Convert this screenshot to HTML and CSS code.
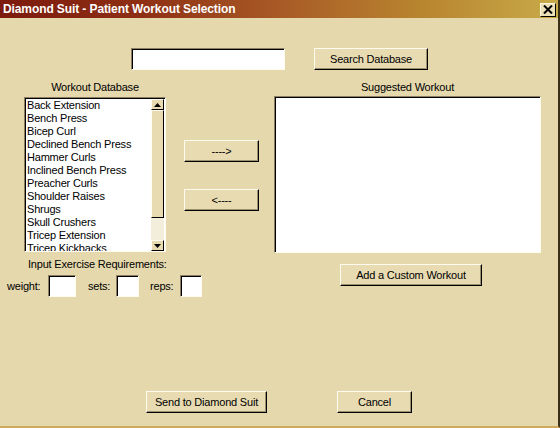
FILE: index.html
```html
<!DOCTYPE html>
<html>
<head>
<meta charset="utf-8">
<link rel="stylesheet" href="styles.css">
</head>
<body>
<div class="win">
  <div class="titlebar">
    <span class="title">Diamond Suit - Patient Workout Selection</span>
    <span class="close"><svg width="10" height="9" viewBox="0 0 10 9"><path d="M1 0.5 L9 8.5 M9 0.5 L1 8.5" stroke="#000" stroke-width="2"/></svg></span>
  </div>
  <div class="search-row">
    <div class="field search-field"></div>
    <div class="btn search-btn">Search Database</div>
  </div>
  <div class="lists-row">
    <div class="left-col">
      <div class="label">Workout Database</div>
      <div class="listbox">
        <ul class="items">
          <li>Back Extension</li>
          <li>Bench Press</li>
          <li>Bicep Curl</li>
          <li>Declined Bench Press</li>
          <li>Hammer Curls</li>
          <li>Inclined Bench Press</li>
          <li>Preacher Curls</li>
          <li>Shoulder Raises</li>
          <li>Shrugs</li>
          <li>Skull Crushers</li>
          <li>Tricep Extension</li>
          <li>Tricep Kickbacks</li>
        </ul>
        <div class="scrollbar">
          <div class="sb-btn"><svg width="7" height="4" viewBox="0 0 7 4"><path d="M3.5 0 L7 4 L0 4 Z" fill="#000"/></svg></div>
          <div class="sb-thumb"></div>
          <div class="sb-track"></div>
          <div class="sb-btn"><svg width="7" height="4" viewBox="0 0 7 4"><path d="M0 0 L7 0 L3.5 4 Z" fill="#000"/></svg></div>
        </div>
      </div>
    </div>
    <div class="mid-col">
      <div class="btn arrow-btn">----&gt;</div>
      <div class="btn arrow-btn">&lt;----</div>
    </div>
    <div class="right-col">
      <div class="label label-right">Suggested Workout</div>
      <div class="field suggested"></div>
    </div>
  </div>
  <div class="req-row">
    <div class="req">
      <div class="req-title">Input Exercise Requirements:</div>
      <div class="req-inputs">
        <span class="lbl lbl-weight">weight:</span>
        <span class="field box box-weight"></span>
        <span class="lbl lbl-sets">sets:</span>
        <span class="field box box-sets"></span>
        <span class="lbl lbl-reps">reps:</span>
        <span class="field box box-reps"></span>
      </div>
    </div>
    <div class="btn custom-btn">Add a Custom Workout</div>
  </div>
  <div class="bottom-row">
    <div class="btn send-btn">Send to Diamond Suit</div>
    <div class="btn cancel-btn">Cancel</div>
  </div>
</div>
</body>
</html>
```
FILE: styles.css
```css
html, body {
  margin: 0;
  padding: 0;
  background: #e5d8ad;
}
.win {
  width: 560px;
  height: 428px;
  box-sizing: border-box;
  background: #e5d8ad;
  border-right: 2px solid #3a3018;
  border-bottom: 2px solid #cfa95e;
  font-family: "Liberation Sans", Arial, sans-serif;
  font-size: 11px;
  letter-spacing: -0.2px;
  color: #000;
  overflow: hidden;
}
.titlebar {
  height: 18px;
  display: flex;
  align-items: center;
  justify-content: space-between;
  background: linear-gradient(to right, #7c1a0d 0%, #8e2f14 25%, #a85a26 50%, #b8842f 75%, #c8aa48 100%);
}
.title {
  color: #fff;
  font-weight: bold;
  font-size: 12px;
  padding-left: 3px;
  letter-spacing: -0.1px;
}
.close {
  width: 16px;
  height: 14px;
  box-sizing: border-box;
  margin-right: 2px;
  margin-top: 1px;
  background: #ece0b8;
  border: 1px solid;
  border-color: #fff8e0 #000 #000 #fff8e0;
  display: flex;
  align-items: center;
  justify-content: center;
}
.field {
  box-sizing: border-box;
  background: #fff;
  border: 1px solid;
  border-color: #8c8060 #fffbee #fffbee #8c8060;
  box-shadow: inset 1px 1px 0 #000;
}
.btn {
  box-sizing: border-box;
  height: 22px;
  background: #e8dbb2;
  border: 1px solid;
  border-color: #fffbee #000 #000 #fffbee;
  box-shadow: inset -1px -1px 0 #9c9070;
  display: flex;
  align-items: center;
  justify-content: center;
  font-size: 11px;
  white-space: nowrap;
}
.search-row {
  display: flex;
  margin-top: 30px;
  padding-left: 131px;
  gap: 29px;
}
.search-field {
  width: 154px;
  height: 22px;
}
.search-btn {
  width: 114px;
}
.lists-row {
  display: flex;
  align-items: flex-start;
  margin-top: 11px;
}
.left-col {
  margin-left: 24px;
  width: 142px;
}
.label {
  height: 16px;
  line-height: 13px;
  text-align: center;
}
.label-right {
  height: 15px;
}
.listbox {
  box-sizing: border-box;
  height: 155px;
  background: #fff;
  border: 1px solid;
  border-color: #8c8060 #fffbee #fffbee #8c8060;
  box-shadow: inset 1px 1px 0 #000;
  display: flex;
  padding: 1px 1px 0 1px;
  overflow: hidden;
}
.items {
  flex: 1;
  list-style: none;
  margin: 0;
  padding: 0 0 0 1px;
  overflow: hidden;
}
.items li {
  height: 13px;
  line-height: 13px;
  white-space: nowrap;
}
.scrollbar {
  width: 13px;
  display: flex;
  flex-direction: column;
  background: #f3eedc;
}
.sb-btn {
  box-sizing: border-box;
  height: 11px;
  background: #e8dbb2;
  border: 1px solid;
  border-color: #fffbee #000 #000 #fffbee;
  display: flex;
  align-items: center;
  justify-content: center;
}
.sb-thumb {
  box-sizing: border-box;
  height: 108px;
  background: #e8dbb2;
  border: 1px solid;
  border-color: #fffbee #000 #000 #fffbee;
}
.sb-track {
  flex: 1;
}
.mid-col {
  margin-left: 18px;
  width: 75px;
  padding-top: 59px;
  display: flex;
  flex-direction: column;
  gap: 27px;
}
.arrow-btn {
  width: 75px;
}
.right-col {
  margin-left: 15px;
  width: 267px;
}
.suggested {
  height: 157px;
}
.req-row {
  display: flex;
  align-items: flex-start;
}
.req {
  width: 340px;
}
.req-title {
  margin-top: 5px;
  padding-left: 28px;
  height: 12px;
  line-height: 12px;
  white-space: nowrap;
}
.req-inputs {
  display: flex;
  align-items: center;
  margin-top: 5px;
  padding-left: 7px;
}
.lbl {
  box-sizing: border-box;
  white-space: nowrap;
}
.lbl-weight { width: 41px; }
.lbl-sets { width: 40px; padding-left: 12px; }
.lbl-reps { width: 41px; padding-left: 11px; }
.box { height: 22px; display: block; }
.box-weight { width: 28px; }
.box-sets { width: 23px; }
.box-reps { width: 22px; }
.custom-btn {
  margin-top: 11px;
  width: 142px;
}
.bottom-row {
  display: flex;
  margin-top: 94px;
  padding-left: 146px;
  gap: 70px;
}
.send-btn { width: 121px; }
.cancel-btn { width: 75px; }
```
